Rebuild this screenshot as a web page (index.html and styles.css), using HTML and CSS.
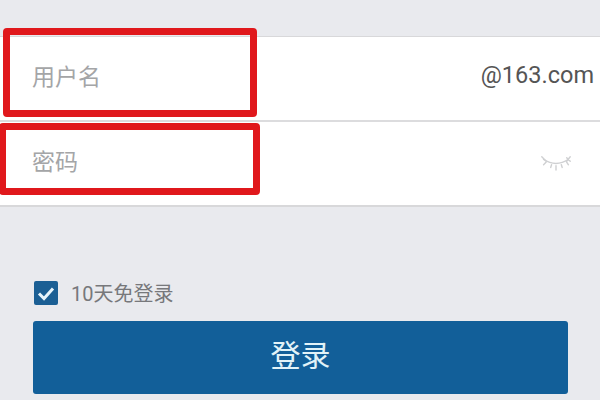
FILE: index.html
```html
<!DOCTYPE html>
<html lang="zh-CN">

<head>
    <meta charset="UTF-8">
    <title>登录</title>
    <link rel="stylesheet" href="styles.css">
</head>

<body>
    <div class="form">
        <div class="row row_user">
            <span class="placeholder">用户名</span>
            <span class="domain">@163.com</span>
        </div>
        <div class="row row_pass">
            <span class="placeholder">密码</span>
            <svg class="eye" width="32" height="16" viewBox="0 0 34 18" fill="none" stroke="#cfd0d2" stroke-width="1.6" stroke-linecap="round">
                <path d="M3 5 Q17 14 31 5" />
                <path d="M1 2 L6 7 M33 2 L29 7 M29 3 L33 7 M6 8 L3 11 M12 11 L11 14 M17 12 V17 M23 11 L24 14 M29 8 L31 11" />
            </svg>
        </div>

        <!-- Red marks drawn over the screenshot -->
        <div class="mark mark_user"></div>
        <div class="mark mark_pass"></div>
    </div>

    <div class="bottom">
        <label class="remember">
            <span class="check">
                <svg width="24" height="24" viewBox="0 0 24 24" fill="none" stroke="#e6f4fb" stroke-width="3">
                    <path d="M5 12.5 L10 17.5 L19 7.5" />
                </svg>
            </span>
            <span class="remember_text">10天免登录</span>
        </label>
        <button class="login">登录</button>
    </div>
</body>

</html>
```

FILE: styles.css
```css
* {
    margin: 0;
    padding: 0;
    box-sizing: border-box;
}

body {
    width: 600px;
    height: 400px;
    overflow: hidden;
    background: #e9eaee;
    padding-top: 36px;
    font-family: "Roboto", "Noto Sans CJK SC", sans-serif;
}

.form {
    position: relative;
    background: #fff;
    border-top: 1px solid #d8d8da;
    border-bottom: 2px solid #d8d8da;
    height: 171px;
}

.row {
    display: flex;
    align-items: center;
    justify-content: space-between;
    padding-left: 32px;
    padding-right: 6px;
}

.row_user {
    height: 85px;
    border-bottom: 2px solid #dcdcde;
    padding-bottom: 8px;
}

.row_pass {
    height: 83px;
    padding-right: 28px;
    padding-bottom: 7px;
}

.placeholder {
    font-size: 23px;
    color: #a4a5a7;
}

.domain {
    font-size: 23.5px;
    color: #555;
}

.eye {
    margin-top: 6px;
}

.mark {
    position: absolute;
    border: 7px solid #e0181c;
    border-radius: 4px;
}

.mark_user {
    left: 3px;
    top: -9px;
    width: 254px;
    height: 89px;
}

.mark_pass {
    left: -1px;
    top: 86px;
    width: 261px;
    height: 72px;
}

.bottom {
    padding: 74px 32px 0 33px;
}

.remember {
    display: flex;
    align-items: center;
    height: 24px;
    margin-left: 1px;
}

.check {
    width: 24px;
    height: 24px;
    background: #1b5f94;
    border-radius: 2px;
    margin-right: 13px;
}

.check svg {
    display: block;
}

.remember_text {
    font-size: 20px;
    color: #77787b;
    margin-top: -2px;
}

.login {
    display: block;
    width: 535px;
    height: 73px;
    margin-top: 16px;
    border: none;
    border-radius: 3px;
    background: #125f99;
    color: #e2f3f8;
    font-family: inherit;
    font-size: 30px;
    padding-bottom: 10px;
}
```
